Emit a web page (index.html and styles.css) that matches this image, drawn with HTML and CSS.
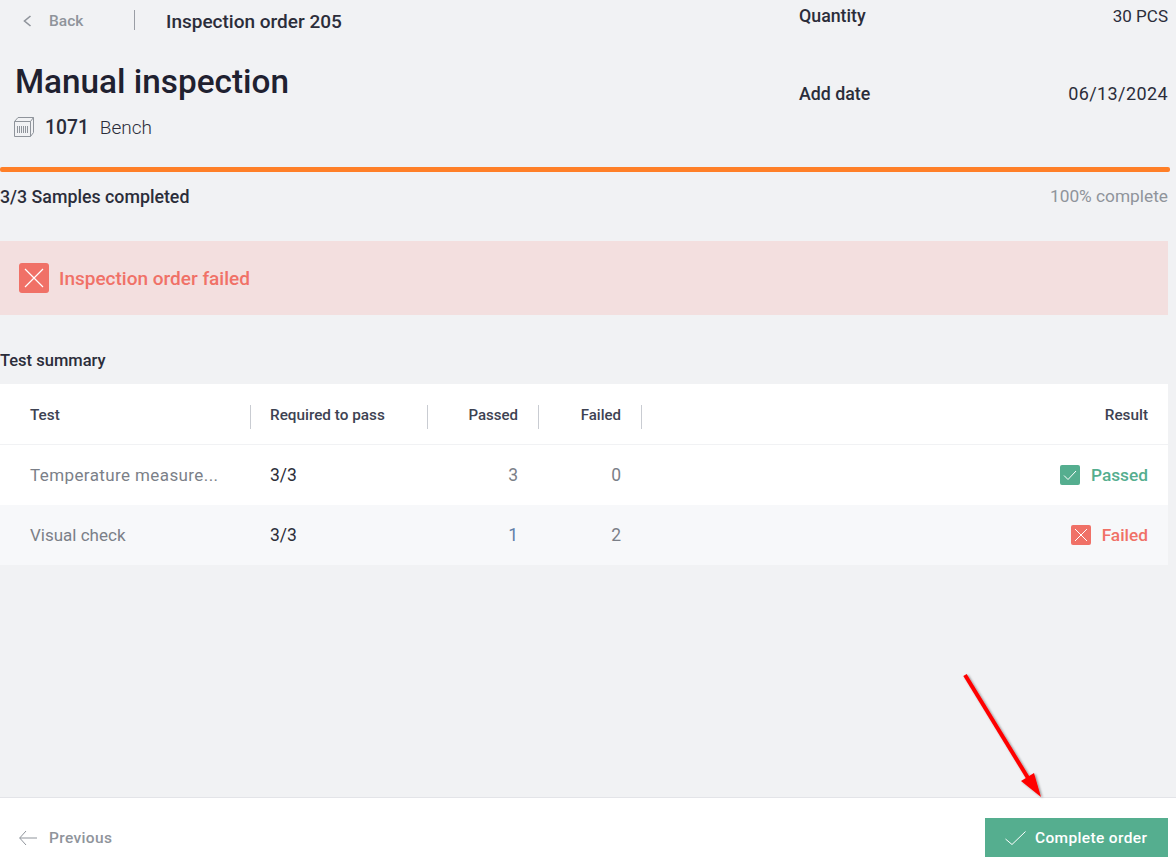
FILE: index.html
```html
<!DOCTYPE html>
<html lang="en">
<head>
<meta charset="utf-8">
<title>Manual inspection</title>
<link rel="stylesheet" href="styles.css">
</head>
<body>
<div class="page">
  <main class="content">
    <header class="head">
      <div class="head-left">
        <div class="topbar">
          <a class="back">
            <svg class="back-icon" width="10" height="12" viewBox="0 0 10 12"><path d="M7.500 1 1.500 6l6 5" fill="none" stroke="#8f949b" stroke-width="1.600"/></svg>
            <span>Back</span>
          </a>
          <span class="top-sep"></span>
          <span class="order-name">Inspection order 205</span>
        </div>
        <h1 class="title">Manual inspection</h1>
        <div class="product">
          <svg class="box-icon" width="20" height="20" viewBox="0 0 20 20" fill="none" stroke="#8f949b" stroke-width="1">
            <path d="M.5 4.500h16v15h-16zM.5 4.500l3.500-4h15.500l-3 4M19.500.500v15l-3 4"/>
            <path d="M3.500 9v7M5.500 9v7M7.500 9v7M9.500 9v7M11.500 9v7M13.500 9v7"/>
          </svg>
          <b class="product-id">1071</b>
          <span class="product-name">Bench</span>
        </div>
      </div>
      <dl class="meta">
        <div class="meta-row meta-qty"><dt>Quantity</dt><dd class="qty">30 PCS</dd></div>
        <div class="meta-row meta-date"><dt>Add date</dt><dd class="date">06/13/2024</dd></div>
      </dl>
    </header>

    <div class="progress"></div>
    <div class="progress-info">
      <span class="samples">3/3 Samples completed</span>
      <span class="percent">100% complete</span>
    </div>

    <div class="alert">
      <span class="status-icon status-icon-lg fail">
        <svg viewBox="0 0 30 30" width="30" height="30"><path d="M6 6l18 18M24 6 6 24" stroke="#fff" stroke-width="1.200" fill="none"/></svg>
      </span>
      <span class="alert-text">Inspection order failed</span>
    </div>

    <h2 class="section-title">Test summary</h2>

    <div class="table">
      <div class="row row-head">
        <div class="cell cell-test"><span>Test</span></div>
        <div class="cell cell-req"><span>Required to pass</span></div>
        <div class="cell cell-num"><span>Passed</span></div>
        <div class="cell cell-num"><span>Failed</span></div>
        <div class="cell cell-result"><span>Result</span></div>
      </div>
      <div class="row">
        <div class="cell cell-test cell-long">Temperature measure...</div>
        <div class="cell cell-req">3/3</div>
        <div class="cell cell-num">3</div>
        <div class="cell cell-num">0</div>
        <div class="cell cell-result result-pass">
          <span class="status-icon pass"><svg viewBox="0 0 20 20" width="20" height="20"><path d="M4 10.500l4 4 8-8.500" stroke="#fff" stroke-width="1" fill="none"/></svg></span>
          Passed
        </div>
      </div>
      <div class="row row-alt">
        <div class="cell cell-test">Visual check</div>
        <div class="cell cell-req">3/3</div>
        <div class="cell cell-num num-blue">1</div>
        <div class="cell cell-num">2</div>
        <div class="cell cell-result result-fail">
          <span class="status-icon fail"><svg viewBox="0 0 20 20" width="20" height="20"><path d="M4 4l12 12M16 4 4 16" stroke="#fff" stroke-width="1" fill="none"/></svg></span>
          Failed
        </div>
      </div>
    </div>
  </main>

  <footer class="footer">
    <a class="prev">
      <svg width="20" height="16" viewBox="0 0 20 16"><path d="M18 8H.7M7 1 .7 8 7 15" fill="none" stroke="#8f949b" stroke-width="1"/></svg>
      <span>Previous</span>
    </a>
    <button class="complete" type="button">
      <svg width="21" height="14" viewBox="0 0 21 14"><path d="M.5 8 7 13.500 20.500.5" fill="none" stroke="#fff" stroke-width="1"/></svg>
      <span>Complete order</span>
    </button>
  </footer>

  <svg class="annotation" width="90" height="140" viewBox="0 0 90 140">
    <defs><filter id="sh" x="-20%" y="-20%" width="140%" height="140%"><feDropShadow dx="1.500" dy="1" stdDeviation="1" flood-color="#000" flood-opacity=".4"/></filter></defs>
    <g filter="url(#sh)">
      <path d="M5 5 68 108" stroke="#fe0000" stroke-width="4" fill="none"/>
      <path d="M81 127 61 111 74 103z" fill="#fe0000"/>
    </g>
  </svg>
</div>
</body>
</html>
```
FILE: styles.css
```css
* { box-sizing: border-box; }
html, body { margin: 0; height: 100%; }
body {
  background: #f1f2f4;
  color: #2b2d3a;
  font-family: Roboto, "Liberation Sans", sans-serif;
  overflow: hidden;
}
.page {
  position: relative;
  height: 866px;
  display: flex;
  flex-direction: column;
}
.content { flex: 1; padding-right: 8px; }

.head { display: flex; height: 167px; }
.head-left { width: 799px; }
.topbar { display: flex; align-items: center; height: 40px; padding-left: 23px; }
.back { display: flex; align-items: center; gap: 16px; width: 111px; padding-top: 2px; color: #8f949b; font-size: 15.500px; font-weight: 500; }
.top-sep { width: 1px; height: 20px; background: #9a9ea5; }
.order-name { margin-left: 31px; padding-top: 2px; font-size: 19px; font-weight: 500; }
.title { margin: 19px 0 0 15px; font-size: 33.300px; line-height: 46px; font-weight: 500; color: #1f2130; }
.product { display: flex; align-items: center; margin: 10px 0 0 14px; height: 24px; font-size: 19.300px; }
.product-id { margin-left: 11px; font-weight: 500; }
.product-name { margin-left: 11px; font-weight: 300; font-size: 19px; }

.meta { flex: 1; margin: 0; font-size: 17.800px; font-weight: 500; }
.meta-row { display: flex; justify-content: space-between; }
.meta dt { font-weight: 500; }
.meta dd { margin: 0; font-weight: 400; }
.meta .qty { font-size: 17px; }
.meta .date { font-size: 18px; letter-spacing: .4px; }
.meta-qty { height: 32px; line-height: 32px; }
.meta-date { margin-top: 46px; height: 32px; line-height: 32px; }

.progress { width: 1170px; height: 5px; background: #ff7f27; border-radius: 2px; }
.progress-info { display: flex; justify-content: space-between; align-items: center; height: 48px; font-size: 17.300px; }
.samples { font-size: 17.800px; font-weight: 500; }
.percent { color: #8f949b; }

.alert {
  display: flex; align-items: center; gap: 10px;
  height: 74px; margin-top: 21px; padding-left: 19px;
  background: #f3dfdf; color: #f07167; font-size: 19px; font-weight: 500;
}
.status-icon { display: inline-flex; width: 20px; height: 20px; border-radius: 2px; }
.status-icon-lg { width: 30px; height: 30px; border-radius: 3px; }
.status-icon.fail { background: #f07167; }
.status-icon.pass { background: #55ae8f; }

.section-title { margin: 34px 0 0; height: 35px; line-height: 24px; font-size: 16.500px; font-weight: 500; }

.table { background: #fff; font-size: 17px; }
.row {
  display: grid;
  grid-template-columns: 251px 177px 111px 103px 1fr;
  height: 60px;
  align-items: center;
  color: #7b7f88;
}
.row-head { height: 61px; padding-top: 6px; font-size: 15.300px; font-weight: 500; color: #3d4252; border-bottom: 1px solid #f1f2f4; }
.row-alt { background: #f7f8fa; }
.cell-test { padding-left: 30px; }
.cell-long { letter-spacing: .4px; }
.cell-req { padding-left: 19px; font-size: 17.500px; color: #2b2d3a; }
.cell-num { padding-right: 21px; text-align: right; font-size: 17.500px; }
.cell-result { display: flex; justify-content: flex-end; align-items: center; gap: 11px; padding-right: 20px; font-size: 17.300px; font-weight: 500; }
.row-head .cell { display: flex; align-items: center; height: 24px; font-size: 15.300px; color: #3d4252; }
.row-head .cell span { margin-top: -4px; }
.row-head .cell-num { justify-content: flex-end; padding-right: 20px; font-size: 15px; }
.row-head .cell:not(.cell-result) { border-right: 1px solid #c9ccd2; }
.row-head .cell-test { border-right-width: 2px; }
.num-blue { color: #5f7fa8; }
.result-pass { color: #55ae8f; }
.result-fail { color: #f07167; }

.footer {
  display: flex; justify-content: space-between; align-items: flex-start;
  height: 69px; padding: 20px 8px 0 19px;
  background: #fff; border-top: 1px solid #e3e4e8;
}
.prev { display: flex; align-items: center; gap: 10px; height: 39px; color: #8f949b; font-size: 15.500px; letter-spacing: .35px; font-weight: 500; }
.complete {
  display: flex; align-items: center; gap: 9px;
  width: 183px; height: 39px; padding: 0 0 0 20px;
  border: 0; background: #55ae8f; color: #fff;
  font: 500 15.500px Roboto, "Liberation Sans", sans-serif;
  letter-spacing: .35px;
}
.annotation { position: absolute; left: 960px; top: 670px; pointer-events: none; }
```
